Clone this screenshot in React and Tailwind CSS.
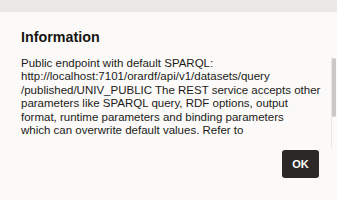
import React from 'react';

const lines = [
  'Public endpoint with default SPARQL:',
  'http://localhost:7101/orardf/api/v1/datasets/query',
  '/published/UNIV_PUBLIC The REST service accepts other',
  'parameters like SPARQL query, RDF options, output',
  'format, runtime parameters and binding parameters',
  'which can overwrite default values. Refer to',
];

const App = () => {
  return (
    <div
      className="flex h-[200px] w-[337px] flex-col overflow-hidden bg-[#fbfaf8] text-[#1b1a18]"
      style={{ fontFamily: '"Liberation Sans", Arial, sans-serif' }}
    >
      {/* page behind the dialog */}
      <div className="h-[12px] w-full shrink-0 bg-[#eae9e7]" />

      <div className="flex flex-1 flex-col">
        <h2 className="mt-[15.5px] pl-[21px] text-[14.3px] font-bold leading-[18px] text-[#161513]">Information</h2>

        <div className="mt-[11.4px] flex">
          <div className="flex-1 pl-[21px] text-[11.5px] leading-[13.4px]">
            {lines.map((l) => (
              <div key={l} className="whitespace-nowrap">{l}</div>
            ))}
          </div>
          <div className="flex h-[91px] w-[6px] border-l border-[#e8e7e5]">
            <div className="mt-[1px] h-[59px] w-[4px] rounded-full bg-[#c9c8c6]" />
          </div>
        </div>

        <div className="mt-[2px] flex justify-end pr-[18px]">
          <button className="flex h-[28px] w-[37px] items-center justify-center rounded-[3px] bg-[#2b2825] text-[11px] font-bold text-white">
            OK
          </button>
        </div>
      </div>
    </div>
  );
};

export default App;
